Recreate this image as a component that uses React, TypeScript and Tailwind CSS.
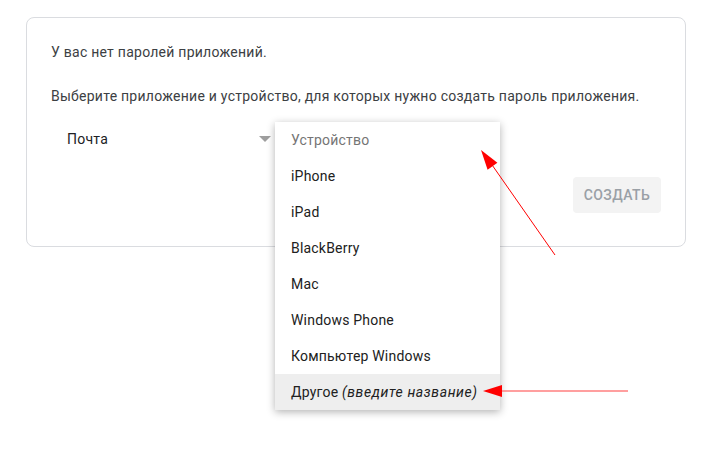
import React from "react";

const items = ["iPhone", "iPad", "BlackBerry", "Mac", "Windows Phone", "Компьютер Windows"];

export default function App() {
  return (
    <div className="relative w-[708px] h-[467px] bg-white overflow-hidden" style={{ fontFamily: "Roboto, 'Noto Sans', sans-serif" }}>
      <div className="ml-[26px] mt-[17px] w-[660px] h-[230px] rounded-[8px] border border-[#dadce0] px-6 pt-[24px] text-[14px] leading-[20px] tracking-[0.25px] text-[#3c4043]">
        <p>У вас нет паролей приложений.</p>
        <p className="mt-[24px]">Выберите приложение и устройство, для которых нужно создать пароль приложения.</p>
        <div className="mt-[13px] flex h-[40px] w-[225px] items-center justify-between pl-4 pr-[5px]">
          <span className="text-[#202124]">Почта</span>
          <span className="h-0 w-0 border-x-[6px] border-t-[6px] border-x-transparent border-t-[#9e9e9e]" />
        </div>
        <div className="mt-[18px] flex justify-end">
          <div className="flex h-[36px] w-[88px] items-center justify-center rounded-[4px] bg-[#f3f3f3] text-[14px] font-medium tracking-[0.4px] text-[#9aa0a6]">
            СОЗДАТЬ
          </div>
        </div>
      </div>

      <div className="absolute left-[275px] top-[122px] w-[225px] bg-white text-[14px] tracking-[0.2px] shadow-[0_2px_8px_rgba(0,0,0,0.3)]">
        <div className="flex h-[36px] items-center px-4 text-[#757575]">Устройство</div>
        {items.map((t) => (
          <div key={t} className="flex h-[36px] items-center px-4 text-[#212121]">{t}</div>
        ))}
        <div className="flex h-[36px] items-center bg-[#eeeeee] px-4 text-[#212121]">
          Другое&nbsp;<i className="tracking-[0.6px]">(введите название)</i>
        </div>
      </div>

      <svg className="pointer-events-none absolute left-0 top-0" width="708" height="467" viewBox="0 0 708 467">
        <line x1="555" y1="255" x2="490" y2="162" stroke="#ff0000" strokeWidth="1" />
        <polygon points="481,150 497.4,162.8 487.6,169.8" fill="#ff0000" />
        <line x1="628" y1="391" x2="500" y2="391" stroke="#ff7f7f" strokeWidth="1.5" />
        <polygon points="483,391 502,385 502,397" fill="#ff0000" />
      </svg>
    </div>
  );
}
